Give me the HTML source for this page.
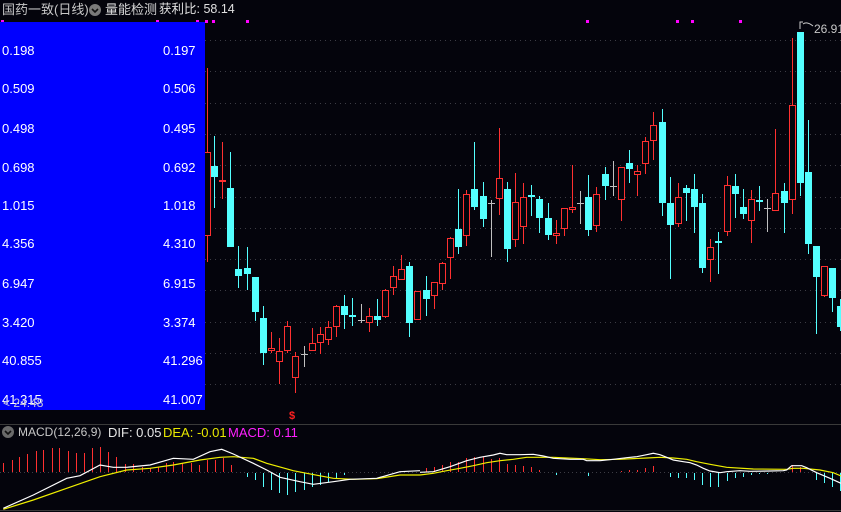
<!DOCTYPE html>
<html><head><meta charset="utf-8">
<style>
html,body{margin:0;padding:0;background:#04040c;}
body{width:841px;height:512px;overflow:hidden;position:relative;font-family:"Liberation Sans","Noto Sans CJK SC",sans-serif;}
.t{position:absolute;font-size:13px;white-space:nowrap;line-height:15px;}
#blue{position:absolute;left:0;top:22px;width:205px;height:388px;background:#0000ff;}
.v{position:absolute;color:#fff;font-size:13px;line-height:15px;}
</style></head><body>
<svg id="s" width="841" height="512" style="position:absolute;left:0;top:0">
<g id="grid"></g><g id="c"></g><g id="m"></g>
</svg>
<div id="blue"></div>
<div id="vals"></div>
<div class="t" style="left:2px;top:2px;color:#c8c8c8">国药一致(日线)</div>
<svg style="position:absolute;left:89px;top:4px" width="12" height="12"><circle cx="6" cy="6" r="6" fill="#7a7a7a"/><path d="M3 5 L6 8 L9 5" stroke="#111" stroke-width="1.6" fill="none"/></svg>
<div class="t" style="left:105px;top:2px;color:#d8d8d8">量能检测</div>
<div class="t" style="left:159px;top:2px;color:#e0e0e0;font-size:12.5px">获利比: 58.14</div>
<div class="t" style="left:3px;top:396px;color:#c8c8d8;font-size:12px">&lt; 24.48</div>
<div class="t" style="left:814px;top:22px;color:#c8c8c8;font-size:12px">26.91</div>
<svg style="position:absolute;left:798px;top:20px" width="18" height="10"><path d="M2 9 V2 H5 M5 4 Q9 1 15 6" stroke="#ccc" stroke-width="1" fill="none"/></svg>
<div class="t" style="left:289px;top:409px;color:#ff2020;font-size:11px;font-weight:bold">$</div>
<svg style="position:absolute;left:2px;top:426px" width="12" height="12"><circle cx="6" cy="6" r="6" fill="#6a6a6a"/><path d="M3 5 L6 8 L9 5" stroke="#111" stroke-width="1.6" fill="none"/></svg>
<div class="t" style="left:18px;top:425px;color:#c8c8c8;font-size:12px">MACD(12,26,9)</div>
<div class="t" style="left:108px;top:425px;color:#e8e8e8">DIF: 0.05</div>
<div class="t" style="left:163px;top:425px;color:#e8e800">DEA: -0.01</div>
<div class="t" style="left:228px;top:425px;color:#ff20ff">MACD: 0.11</div>
<script>
var NS="http://www.w3.org/2000/svg";
function el(p,t,a){var e=document.createElementNS(NS,t);for(var k in a)e.setAttribute(k,a[k]);document.getElementById(p).appendChild(e);return e;}
for(var k=0;k<12;k++){var y=40.5+Math.round(k*31.3);el('grid','line',{x1:205,x2:841,y1:y,y2:y,stroke:'#3c3c44','stroke-dasharray':'1,4'});}
el('grid','line',{x1:0,x2:841,y1:424.5,y2:424.5,stroke:'#3a3a3a'});
el('grid','line',{x1:0,x2:841,y1:510.5,y2:510.5,stroke:'#3a3a3a'});
el('grid','line',{x1:0,x2:841,y1:472.5,y2:472.5,stroke:'#3c3c44','stroke-dasharray':'1,3'});
[2,157,197,206,213,247,587,677,692,740].forEach(function(x){el('grid','rect',{x:x-1,y:20,width:3,height:3,fill:'#ff00ff'});});
var C=[
[207,'r',152,236,68,262],[214,'c',166,177,136,208],[222,'r',180,182,142,199],[230,'c',188,247,152,247],[238,'c',269,276,246,288],[247,'c',268,274,247,290],[255,'c',277,312,277,321],[263,'c',318,353,306,365],[271,'r',348,351,332,353],[279,'r',351,362,338,384],[287,'r',326,351,321,353],[295,'r',356,378,352,393],[304,'g',354,354,346,367],[312,'r',343,351,328,351],[320,'r',334,343,327,354],[328,'r',327,340,321,345],[336,'r',306,327,305,337],[344,'c',306,315,295,329],[352,'c',315,317,298,326],[361,'g',320,320,304,323],[369,'r',316,323,308,332],[377,'c',316,320,299,326],[385,'r',290,317,289,318],[393,'r',276,288,266,295],[401,'r',269,280,255,280],[409,'c',266,323,262,337],[417,'r',291,320,291,320],[426,'c',290,299,276,316],[434,'r',282,296,282,309],[442,'r',263,284,262,290],[450,'r',238,258,237,279],[458,'c',229,247,189,254],[466,'r',194,236,190,246],[474,'c',189,207,142,210],[483,'c',196,219,182,227],[491,'g',203,203,200,257],[499,'r',178,199,128,215],[507,'c',189,249,182,262],[515,'r',202,240,173,247],
[523,'r',197,227,183,244],[531,'c',195,197,185,216],[539,'c',199,218,196,233],[548,'c',218,235,203,240],[556,'r',233,236,220,244],[564,'r',208,229,208,236],[572,'r',207,210,165,213],[580,'g',203,203,191,224],[588,'c',197,230,175,236],[596,'r',194,226,187,232],[605,'c',174,186,167,200],[613,'g',186,186,161,196],[621,'r',167,200,167,221],[629,'c',163,169,150,183],[637,'r',171,175,165,196],[645,'r',141,164,137,174],[653,'r',125,141,112,160],[662,'c',122,203,109,216],[670,'c',203,225,177,279],[678,'r',197,224,183,227],[686,'c',188,193,185,221],[694,'c',189,207,174,233],[702,'c',203,268,194,273],[710,'r',247,260,239,282],[718,'c',241,243,232,274],[727,'r',185,232,176,236],[735,'c',186,194,174,218],[743,'c',207,214,189,219],[751,'r',199,221,190,243],[759,'c',200,202,186,211],[767,'g',208,208,199,232],[775,'r',193,211,129,211],[784,'c',191,203,183,233],[792,'r',105,200,38,214],[800,'c',32,183,32,196],[808,'c',172,244,120,254],[816,'c',246,277,246,334],[824,'r',266,296,266,297],[832,'c',268,298,268,312],[840,'c',306,327,299,331]];
C.forEach(function(d){var x=d[0],col={r:'#ff3030',c:'#54ffff',g:'#c0c0c0'}[d[1]];
el('c','line',{x1:x+.5,x2:x+.5,y1:d[4],y2:d[5],stroke:col});
if(d[1]=='g'){el('c','line',{x1:x-3,x2:x+4,y1:d[2]+.5,y2:d[2]+.5,stroke:col});}
else if(d[1]=='r'){el('c','rect',{x:x-2.5,y:d[2]+.5,width:6,height:Math.max(1,d[3]-d[2]-1),fill:'#04040c',stroke:col});}
else{el('c','rect',{x:x-3,y:d[2],width:7,height:Math.max(2,d[3]-d[2]),fill:col});}
});
var R=[[3,463],[12,460],[19,457],[27,454],[36,451],[43,450],[52,448],[59,448],[68,451],[76,453],[84,453],[92,448],[100,447],[108,452],[116,457],[125,464],[133,464],[142,467],[150,468],[158,467],[166,463],[173,462],[182,463],[191,463],[199,465],[207,460],[215,460],[223,458],[231,465],
[426,468],[434,467],[442,465],[450,462],[458,462],[466,458],[474,457],[483,457],[491,459],[499,458],[507,464],[515,465],[523,466],[531,467],[539,470],[621,471],[629,470],[637,470],[645,468],[653,466],[792,465],[800,467]];
R.forEach(function(b){el('m','line',{x1:b[0]+.5,x2:b[0]+.5,y1:b[1],y2:472,stroke:'#ff3030'});});
var B=[[247,477],[255,480],[263,487],[271,490],[279,493],[287,495],[295,492],[304,490],[312,487],[320,485],[328,482],[336,478],[344,475],[556,475],[564,473],[572,473],[580,473],[588,476],[596,473],[605,473],[670,477],[678,478],[686,478],[694,480],[702,485],[710,487],[718,487],[727,481],[735,478],[743,477],[751,475],[759,474],[767,474],[775,473],[816,480],[824,483],[832,487],[840,491]];
B.forEach(function(b){el('m','line',{x1:b[0]+.5,x2:b[0]+.5,y1:473,y2:b[1],stroke:'#54ffff'});});
function pl(pts,ox,oy,col){var s=pts.split(' ').map(function(p){var a=p.split(',');return (ox+a[0]/3).toFixed(1)+','+(oy+a[1]/3).toFixed(1);}).join(' ');el('m','polyline',{points:s,fill:'none',stroke:col,'stroke-width':1.2});}
pl("10,388 100,360 200,325 300,290 380,270 450,265 520,255 600,240 660,232 700,230 760,235 800,250 880,272 920,280 1000,295 1060,298 1130,296 1200,285 1260,285",0,380,'#f0f000');
pl("10,385 100,345 200,295 240,287 300,255 340,262 380,262 450,255 520,235 580,238 630,215 665,208 700,222 760,250 800,270 840,292 900,305 940,313 1000,305 1050,298 1130,295 1200,275 1260,272",0,380,'#ffffff');
pl("0,165 40,160 80,152 120,145 160,137 200,128 240,122 280,118 320,112 400,112 440,114 490,116 540,119 600,118 680,114 720,112 760,114 800,118 830,125 870,133 920,142 1000,147 1100,148 1120,145 1150,145 1200,150 1240,158 1263,168",420,420,'#f0f000');
pl("0,157 40,155 90,140 140,122 180,112 220,105 240,100 260,104 300,104 340,103 370,108 400,115 450,118 490,118 500,122 540,122 580,118 620,113 650,110 680,104 700,100 720,104 740,112 760,120 790,125 810,128 830,135 850,145 870,153 900,158 920,155 960,152 990,154 1050,153 1090,152 1100,150 1115,137 1145,137 1160,143 1190,158 1230,175 1263,190",420,420,'#ffffff');
var L=["0.198","0.509","0.498","0.698","1.015","4.356","6.947","3.420","40.855","41.315"],Rv=["0.197","0.506","0.495","0.692","1.018","4.310","6.915","3.374","41.296","41.007"],Y=[43,81,121,160,198,236,276,315,353,392];
var h='';for(var i=0;i<10;i++){h+='<div class="v" style="left:2px;top:'+Y[i]+'px">'+L[i]+'</div><div class="v" style="left:163px;top:'+Y[i]+'px">'+Rv[i]+'</div>';}
document.getElementById('vals').innerHTML=h;
</script>
</body></html>
